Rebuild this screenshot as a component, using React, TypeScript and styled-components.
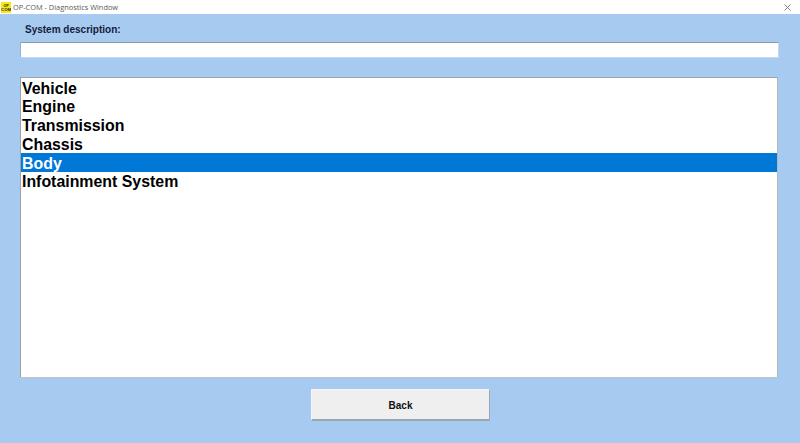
import React from "react";
import styled, { createGlobalStyle } from "styled-components";

const Global = createGlobalStyle`
  html, body { margin: 0; padding: 0; width: 800px; height: 443px; overflow: hidden; background: #a6caf0; }
  * { box-sizing: border-box; }
`;

const Windowed = styled.div`
  width: 800px;
  height: 443px;
  display: flex;
  flex-direction: column;
  background: #a6caf0;
  font-family: "Liberation Sans", Arial, sans-serif;
`;

const TitleBar = styled.div`
  height: 14px;
  flex: none;
  background: #fff;
  display: flex;
  align-items: center;
  padding: 0 9px 0 1px;
`;

const AppIcon = styled.svg`
  width: 10px;
  height: 11px;
  flex: none;
  margin-right: 2px;
`;

const IconLabel = styled.text`
  font-family: "Liberation Sans", Arial, sans-serif;
  font-weight: 700;
  fill: #2a2410;
  text-anchor: middle;
`;

const TitleText = styled.span`
  font-family: "Open Sans", "Noto Sans", sans-serif;
  font-size: 7.4px;
  color: #5a5a5a;
  line-height: 14px;
  flex: 1;
`;

const CloseIcon = styled.svg`
  width: 7px;
  height: 7px;
  flex: none;
`;

const Content = styled.div`
  flex: 1;
  display: flex;
  flex-direction: column;
  padding: 9px 21px 0 20px;
`;

const Label = styled.div`
  font-size: 10px;
  font-weight: 700;
  color: #14203a;
  line-height: 13px;
  height: 19px;
  padding-left: 5px;
`;

const DescriptionField = styled.div`
  height: 16px;
  background: #fff;
  border-top: 1px solid #8f9aa8;
  border-left: 1px solid #9fb0c4;
  border-bottom: 1px solid #c4d8ee;
  border-right: 1px solid #c4d8ee;
`;

const ListBox = styled.div`
  margin-top: 19px;
  margin-right: 1px;
  height: 301px;
  background: #fff;
  border: 1px solid #b4b8bc;
  border-top-color: #a0a4a8;
  border-left-color: #a0a4a8;
  border-bottom-color: #c0c4c8;
  display: flex;
  flex-direction: column;
`;

const Row = styled.div<{ $selected?: boolean }>`
  height: 18.75px;
  flex: none;
  padding: 1.5px 0 0 1px;
  font-size: 15.9px;
  font-weight: 700;
  line-height: 18.75px;
  white-space: nowrap;
  color: ${(p) => (p.$selected ? "#fff" : "#000")};
  background: ${(p) => (p.$selected ? "#0078d7" : "transparent")};
`;

const Footer = styled.div`
  margin-top: 11px;
  display: flex;
  padding-left: 291px;
`;

const BackButton = styled.button`
  width: 179px;
  height: 32px;
  background: #efefef;
  border: none;
  border-right: 1px solid #9aa6b2;
  border-bottom: 2px solid #9aa6b2;
  border-top: 1px solid #f6f6f6;
  border-left: 1px solid #f6f6f6;
  font-family: "Liberation Sans", Arial, sans-serif;
  font-size: 10px;
  font-weight: 700;
  color: #111;
  padding: 1px 0 0;
`;

const items = ["Vehicle", "Engine", "Transmission", "Chassis", "Body", "Infotainment System"];

export default function App() {
  return (
    <>
      <Global />
      <Windowed>
        <TitleBar>
          <AppIcon viewBox="0 0 10 11">
            <rect width="10" height="11" fill="#f6e716" />
            <IconLabel x="5" y="4.5" fontSize="3.6">OP</IconLabel>
            <IconLabel x="5" y="9" fontSize="4.2">COM</IconLabel>
          </AppIcon>
          <TitleText>OP-COM - Diagnostics Window</TitleText>
          <CloseIcon viewBox="0 0 7 7">
            <path d="M0.5 0.5L6.5 6.5M6.5 0.5L0.5 6.5" stroke="#666" strokeWidth="0.8" fill="none" />
          </CloseIcon>
        </TitleBar>
        <Content>
          <Label>System description:</Label>
          <DescriptionField />
          <ListBox>
            {items.map((item) => (
              <Row key={item} $selected={item === "Body"}>{item}</Row>
            ))}
          </ListBox>
          <Footer>
            <BackButton>Back</BackButton>
          </Footer>
        </Content>
      </Windowed>
    </>
  );
}
